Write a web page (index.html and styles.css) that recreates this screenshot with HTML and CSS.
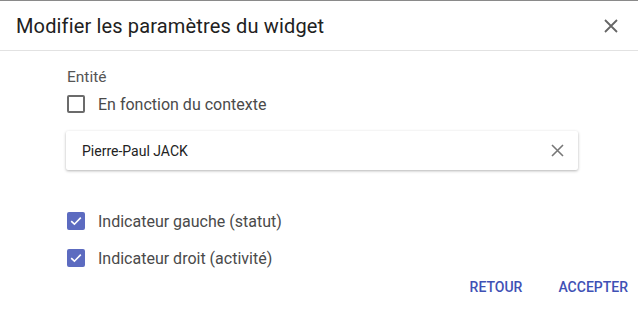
FILE: index.html
```html
<!DOCTYPE html>
<html lang="fr">
<head>
<meta charset="utf-8">
<link rel="stylesheet" href="styles.css">
</head>
<body>
<div class="dialog">
  <div class="header">
    <h1 class="title">Modifier les paramètres du widget</h1>
    <button class="close" aria-label="Fermer">
      <svg width="14" height="14" viewBox="0 0 14 14"><path d="M1 1L13 13M13 1L1 13" stroke="#666" stroke-width="1.8" fill="none"/></svg>
    </button>
  </div>
  <div class="content">
    <div class="label">Entité</div>
    <label class="check">
      <span class="box"></span>
      <span class="check-text">En fonction du contexte</span>
    </label>
    <div class="field">
      <span class="field-text">Pierre-Paul JACK</span>
      <svg class="clear" width="13" height="13" viewBox="0 0 13 13"><path d="M1 1L12 12M12 1L1 12" stroke="#777" stroke-width="1.6" fill="none"/></svg>
    </div>
    <label class="check checked first">
      <span class="box"><svg width="12" height="10" viewBox="0 0 12 10"><path d="M1.2 5.2L4.4 8.2L10.8 1.6" stroke="#fff" stroke-width="1.6" fill="none"/></svg></span>
      <span class="check-text">Indicateur gauche (statut)</span>
    </label>
    <label class="check checked second">
      <span class="box"><svg width="12" height="10" viewBox="0 0 12 10"><path d="M1.2 5.2L4.4 8.2L10.8 1.6" stroke="#fff" stroke-width="1.6" fill="none"/></svg></span>
      <span class="check-text">Indicateur droit (activité)</span>
    </label>
  </div>
  <div class="actions">
    <button class="btn">Retour</button>
    <button class="btn">Accepter</button>
  </div>
</div>
</body>
</html>
```
FILE: styles.css
```css
* { box-sizing: border-box; }
html, body { margin: 0; padding: 0; background: #fff; }
body { font-family: Roboto, "Noto Sans", sans-serif; color: rgba(0,0,0,0.87); }
.dialog { width: 638px; height: 315px; border-top: 1px solid #8a8a8a; }
.header { height: 50px; display: flex; align-items: center; justify-content: space-between; padding: 0 20px 0 16px; border-bottom: 1px solid #e2e2e2; }
.title { margin: 0; font-size: 20px; font-weight: 400; color: #212121; letter-spacing: 0.15px; }
.close { border: 0; background: none; padding: 0; width: 14px; height: 14px; display: flex; }
.content { padding: 17px 60px 0 66px; }
.label { font-size: 15.5px; color: #555; line-height: 18px; padding-left: 1px; }
.check { display: flex; align-items: center; height: 18px; margin-top: 9px; padding-left: 1px; }
.box { width: 18px; height: 18px; border: 2px solid #6b6b6b; border-radius: 2px; display: flex; align-items: center; justify-content: center; flex: none; }
.checked .box { background: #5c6bc0; border-color: #5c6bc0; }
.check-text { margin-left: 13px; font-size: 16px; color: #4a4a4a; }
.field { margin-top: 18px; height: 39px; display: flex; align-items: center; justify-content: space-between; padding: 0 14px 0 16px; background: #fff; box-shadow: 0 1px 3px rgba(0,0,0,0.3); border-radius: 2px; }
.field-text { font-size: 14px; color: #222; }
.check.first { margin-top: 42px; }
.check.second { margin-top: 19px; }
.actions { display: flex; justify-content: flex-end; gap: 36px; padding: 12px 10px 0 0; }
.btn { border: 0; background: none; padding: 0; font-family: Roboto, sans-serif; font-size: 14px; font-weight: 500; text-transform: uppercase; color: #3f51b5; letter-spacing: 0; }
```
